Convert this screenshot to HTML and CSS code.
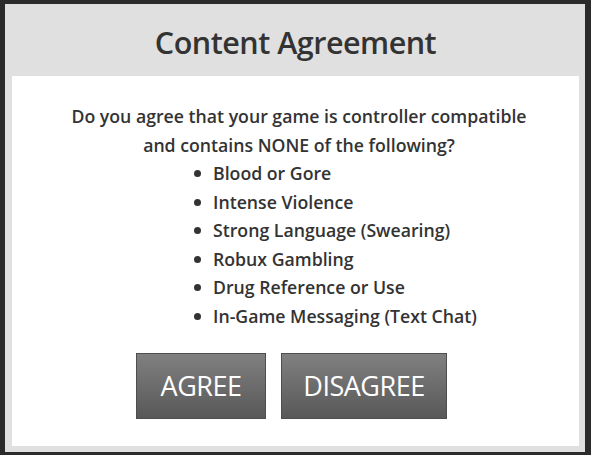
FILE: index.html
```html
<!DOCTYPE html>
<html>
<head>
    <title>Content Agreement</title>
    <link rel="stylesheet" href="styles.css">
</head>
<body>
    <div class="dialog">
        <div class="dialog-title">Content Agreement</div>
        <div class="dialog-body">
            <p class="question">Do you agree that your game is controller compatible<br>and contains NONE of the following?</p>
            <ul class="rules">
                <li>Blood or Gore</li>
                <li>Intense Violence</li>
                <li>Strong Language (Swearing)</li>
                <li>Robux Gambling</li>
                <li>Drug Reference or Use</li>
                <li>In-Game Messaging (Text Chat)</li>
            </ul>
            <div class="actions">
                <button class="btn">AGREE</button>
                <button class="btn">DISAGREE</button>
            </div>
        </div>
    </div>
</body>
</html>
```

FILE: styles.css
```css
body {
    background-color: #2b2b2b;
    margin: 0;
    padding: 4px 6px 3px 5px;
    font-family: "Open Sans", Arial, sans-serif;
    color: #333333;
}
.dialog {
    background-color: #e0e0e0;
    height: 448px;
    padding: 0 6px 6px 7px;
    box-sizing: border-box;
    display: flex;
    flex-direction: column;
}
.dialog-title {
    height: 72px;
    padding-top: 4px;
    box-sizing: border-box;
    display: flex;
    align-items: center;
    justify-content: center;
    font-size: 30.5px;
    font-weight: 600;
    letter-spacing: -0.5px;
    color: #333333;
}
.dialog-body {
    background-color: #ffffff;
    flex: 1;
    display: flex;
    flex-direction: column;
    padding-top: 26px;
}
.question {
    margin: 0;
    padding-left: 7px;
    text-align: center;
    font-size: 17.7px;
    font-weight: 600;
    line-height: 28.5px;
}
.rules {
    margin: 0;
    padding: 0 0 0 201px;
    font-size: 17.7px;
    font-weight: 600;
    line-height: 28.6px;
}
.rules li {
    list-style: none;
    position: relative;
}
.rules li::before {
    content: "";
    position: absolute;
    left: -19px;
    top: 11px;
    width: 7px;
    height: 7px;
    border-radius: 50%;
    background-color: #333333;
}
.actions {
    display: flex;
    justify-content: center;
    gap: 15px;
    margin-top: 22px;
    padding-right: 8px;
}
.btn {
    height: 66px;
    padding: 0 20px;
    background: linear-gradient(#808080, #585858);
    border: 1px solid #4e4e4e;
    color: #ffffff;
    font-family: "Open Sans", Arial, sans-serif;
    font-size: 27px;
    letter-spacing: -0.5px;
}
.btn:first-child {
    width: 130px;
}
.btn:last-child {
    width: 166px;
}
```
